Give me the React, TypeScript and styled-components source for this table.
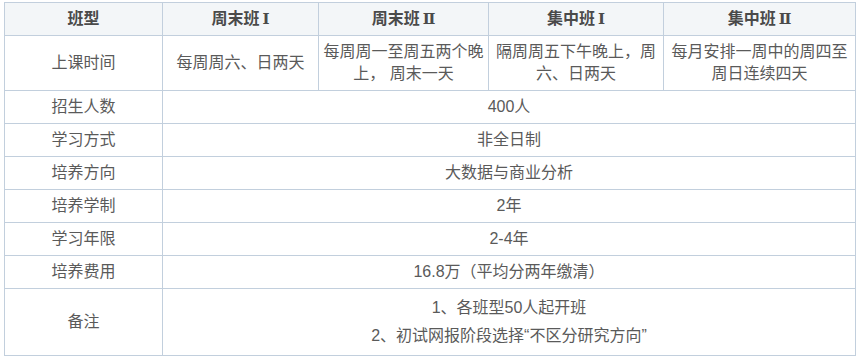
import styled, { createGlobalStyle } from "styled-components";

const GlobalStyle = createGlobalStyle`
  body {
    margin: 0;
    background: #fff;
    font-family: "Liberation Sans", "Noto Sans CJK SC", sans-serif;
  }
`;

const Wrap = styled.div`
  padding: 2px 0 0 4px;
`;

const Table = styled.table`
  border-collapse: collapse;
  table-layout: fixed;
  width: 851px;
  font-size: 16px;
  line-height: 22px;
  color: #5a5a5a;
`;

const HeadCell = styled.th`
  background: #f3f6f8;
  border: 1px solid #c2cfdd;
  padding: 5px 4px;
  font-weight: bold;
  color: #4a4a4a;
  text-align: center;
`;

const Numeral = styled.span`
  font-family: "DejaVu Serif", "Liberation Serif", serif;
  font-size: 15px;
  margin-left: 3px;
`;

const Cell = styled.td<{ $tall?: boolean }>`
  border: 1px solid #c2cfdd;
  padding: ${(p) => (p.$tall ? "8px 4px" : "5px 4px")};
  text-align: center;
  vertical-align: middle;
`;

const NoteLine = styled.div`
  & + & {
    margin-top: 6px;
  }
`;

const widths = [158, 156, 170, 175, 192];

const heads: [string, string][] = [
  ["班型", ""],
  ["周末班", "Ⅰ"],
  ["周末班", "Ⅱ"],
  ["集中班", "Ⅰ"],
  ["集中班", "Ⅱ"],
];

const times = [
  "每周周六、日两天",
  "每周周一至周五两个晚上， 周末一天",
  "隔周周五下午晚上，周六、日两天",
  "每月安排一周中的周四至周日连续四天",
];

const shared = [
  ["招生人数", "400人"],
  ["学习方式", "非全日制"],
  ["培养方向", "大数据与商业分析"],
  ["培养学制", "2年"],
  ["学习年限", "2-4年"],
  ["培养费用", "16.8万（平均分两年缴清）"],
];

export default function App() {
  return (
    <Wrap>
      <GlobalStyle />
      <Table>
        <colgroup>
          {widths.map((w, i) => (
            <col key={i} style={{ width: w }} />
          ))}
        </colgroup>
        <thead>
          <tr>
            {heads.map(([name, num]) => (
              <HeadCell key={name + num}>
                {name}
                {num && <Numeral>{num}</Numeral>}
              </HeadCell>
            ))}
          </tr>
        </thead>
        <tbody>
          <tr>
            <Cell>上课时间</Cell>
            {times.map((t) => (
              <Cell key={t}>{t}</Cell>
            ))}
          </tr>
          {shared.map(([label, value]) => (
            <tr key={label}>
              <Cell>{label}</Cell>
              <Cell colSpan={4}>{value}</Cell>
            </tr>
          ))}
          <tr>
            <Cell>备注</Cell>
            <Cell colSpan={4} $tall>
              <NoteLine>1、各班型50人起开班</NoteLine>
              <NoteLine>2、初试网报阶段选择“不区分研究方向”</NoteLine>
            </Cell>
          </tr>
        </tbody>
      </Table>
    </Wrap>
  );
}
